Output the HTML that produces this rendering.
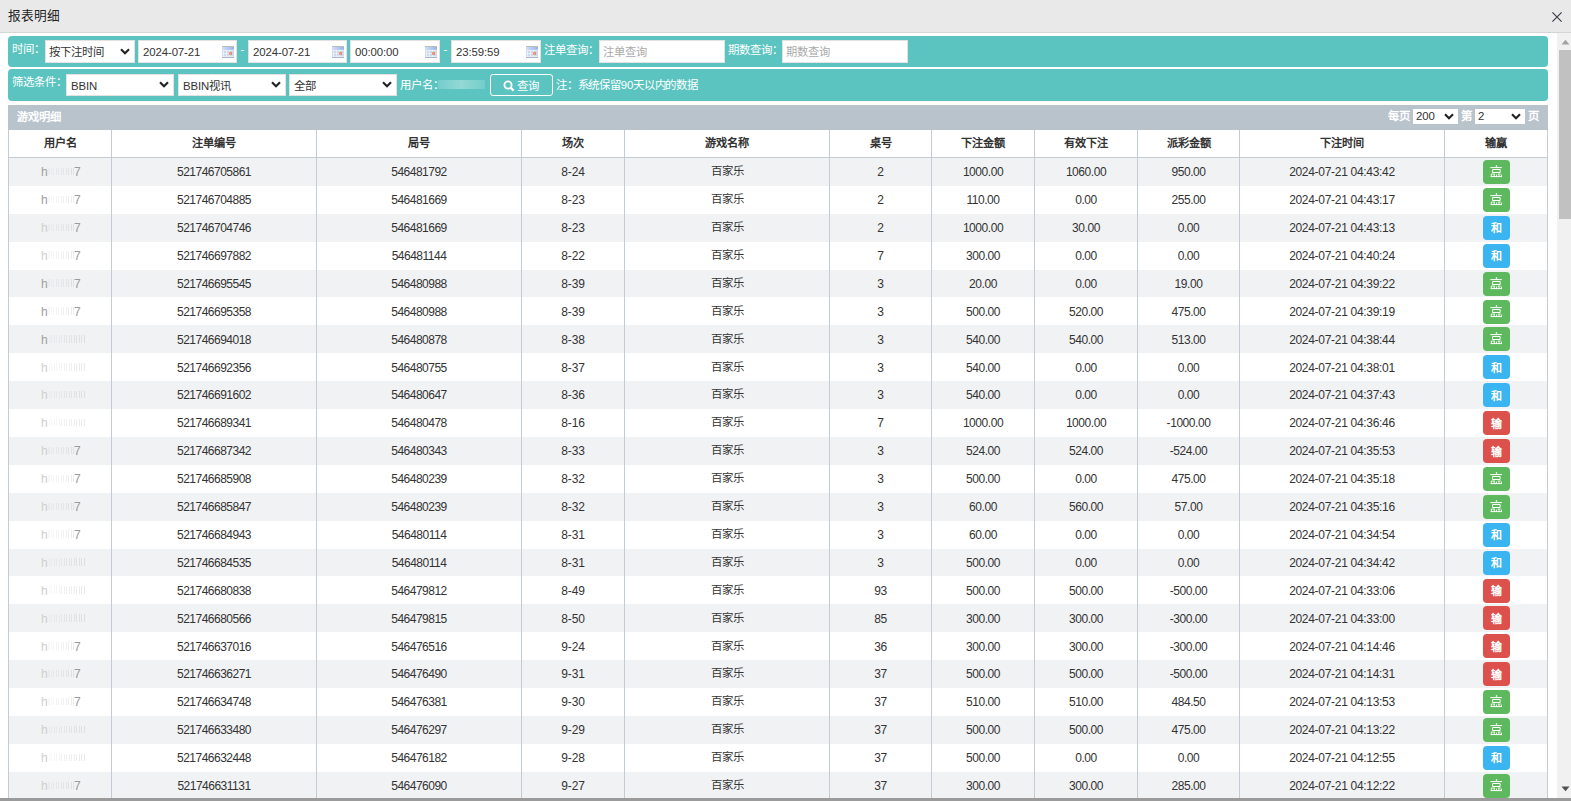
<!DOCTYPE html>
<html lang="zh-CN"><head><meta charset="utf-8"><style>
*{box-sizing:border-box}
html,body{margin:0;padding:0}
body{width:1571px;height:801px;overflow:hidden;position:relative;background:#fff;font-family:"Liberation Sans",sans-serif;color:#333}
.a{position:absolute;white-space:nowrap}
.hdr{position:absolute;left:0;top:0;width:1571px;height:33px;background:#e9e9e9;border-bottom:1px solid #d5d5d5}
.panel{position:absolute;left:8px;width:1540px;background:#5bc4c0;border-radius:4px}
.lbl{position:absolute;color:#fff;font-size:11.4px;font-weight:500;white-space:nowrap;line-height:1}
.box{position:absolute;background:#fff;border:1px solid #e6e1e1}
.txt{position:absolute;font-size:11.4px;letter-spacing:-0.1px;color:#333;white-space:nowrap;line-height:1}
.ph{color:#aaa;font-size:11.3px;letter-spacing:0}
.cal{position:absolute;width:12px;height:12px;background:#cfd9ec;border:1px solid #a3b3cc;border-top:3px solid #8fa3c4}
.cal i{position:absolute;right:1px;bottom:1px;width:4px;height:4px;background:#e59b9b}
.chev{position:absolute}
.bar{position:absolute;left:8px;top:105px;width:1540px;height:25px;background:#b9c3cc}
.tbl{position:absolute;left:8px;top:130px;width:1540px}
.vl{position:absolute;width:1px;background:#c3cbd4}
.row{position:absolute;left:8px;width:1540px}
.c{position:absolute;text-align:center;font-size:11.2px;line-height:1;white-space:nowrap;color:#333}
.h{font-weight:bold;color:#333}
.bd{position:absolute;width:27px;height:24px;border-radius:4px;color:#fff;font-size:11px;line-height:24px;text-align:center;font-weight:bold}
.w{background:#5eb95e}.t{background:#3bb4f2}.l{background:#dd514c}
.sb{position:absolute;left:1557px;top:33px;width:14px;height:765px;background:#f1f1f1}
.thumb{position:absolute;left:1559px;top:50px;width:12px;height:169px;background:#c1c1c1}
.hbar{position:absolute;left:0;top:798px;width:1571px;height:3px;background:#9b9b9b}
</style></head><body>

<div class="hdr"></div>
<div class="a" style="left:8px;top:8px;font-size:12.7px;line-height:16px;color:#222;font-weight:500">报表明细</div>
<svg class="a" style="left:1551px;top:11px" width="12" height="12" viewBox="0 0 12 12"><path d="M1.4 1.4 L10.6 10.6 M10.6 1.4 L1.4 10.6" stroke="#3a3d45" stroke-width="1.15"/></svg>
<div class="panel" style="top:36px;height:31px"></div>
<div class="lbl" style="left:12px;top:43.7px">时间：</div>
<div class="box" style="left:45px;top:40px;width:90px;height:23px"></div>
<div class="txt" style="left:49px;top:47px">按下注时间</div>
<svg class="chev" style="left:120px;top:47.6px" width="10" height="7" viewBox="0 0 10 7"><path d="M1 1.3 L5 5.3 L9 1.3" fill="none" stroke="#222" stroke-width="2.1"/></svg>
<div class="box" style="left:138px;top:40px;width:99px;height:23px"></div>
<div class="txt" style="left:143px;top:47.4px">2024-07-21</div>
<svg class="a" style="left:222px;top:45.6px" width="12" height="12" viewBox="0 0 12 12"><defs><linearGradient id="cg222" x1="0" x2="1"><stop offset="0" stop-color="#d4e0fa"/><stop offset="1" stop-color="#94b0ec"/></linearGradient></defs><rect x="0" y="0" width="12" height="12" rx="1" fill="#cdd8ea"/><rect x="0" y="0" width="12" height="1" fill="#b9bdb3"/><rect x="0" y="1" width="12" height="2.6" fill="url(#cg222)"/><path d="M0.5 4.6H11.5M0.5 7.6H11.5M0.5 10.4H11.5M1.5 4V11M4.5 4V11M7.5 4V11" stroke="#f2f6fc" stroke-width="0.7"/><circle cx="8.6" cy="7.4" r="1.7" fill="#e9866a"/><circle cx="8.6" cy="7.2" r="0.45" fill="#fbe3da"/><rect x="0" y="11" width="12" height="1" fill="#a9b4c6"/></svg>
<div class="box" style="left:248px;top:40px;width:99px;height:23px"></div>
<div class="txt" style="left:253px;top:47.4px">2024-07-21</div>
<svg class="a" style="left:332px;top:45.6px" width="12" height="12" viewBox="0 0 12 12"><defs><linearGradient id="cg332" x1="0" x2="1"><stop offset="0" stop-color="#d4e0fa"/><stop offset="1" stop-color="#94b0ec"/></linearGradient></defs><rect x="0" y="0" width="12" height="12" rx="1" fill="#cdd8ea"/><rect x="0" y="0" width="12" height="1" fill="#b9bdb3"/><rect x="0" y="1" width="12" height="2.6" fill="url(#cg332)"/><path d="M0.5 4.6H11.5M0.5 7.6H11.5M0.5 10.4H11.5M1.5 4V11M4.5 4V11M7.5 4V11" stroke="#f2f6fc" stroke-width="0.7"/><circle cx="8.6" cy="7.4" r="1.7" fill="#e9866a"/><circle cx="8.6" cy="7.2" r="0.45" fill="#fbe3da"/><rect x="0" y="11" width="12" height="1" fill="#a9b4c6"/></svg>
<div class="box" style="left:350px;top:40px;width:90px;height:23px"></div>
<div class="txt" style="left:355px;top:47.4px">00:00:00</div>
<svg class="a" style="left:425px;top:45.6px" width="12" height="12" viewBox="0 0 12 12"><defs><linearGradient id="cg425" x1="0" x2="1"><stop offset="0" stop-color="#d4e0fa"/><stop offset="1" stop-color="#94b0ec"/></linearGradient></defs><rect x="0" y="0" width="12" height="12" rx="1" fill="#cdd8ea"/><rect x="0" y="0" width="12" height="1" fill="#b9bdb3"/><rect x="0" y="1" width="12" height="2.6" fill="url(#cg425)"/><path d="M0.5 4.6H11.5M0.5 7.6H11.5M0.5 10.4H11.5M1.5 4V11M4.5 4V11M7.5 4V11" stroke="#f2f6fc" stroke-width="0.7"/><circle cx="8.6" cy="7.4" r="1.7" fill="#e9866a"/><circle cx="8.6" cy="7.2" r="0.45" fill="#fbe3da"/><rect x="0" y="11" width="12" height="1" fill="#a9b4c6"/></svg>
<div class="box" style="left:451px;top:40px;width:90px;height:23px"></div>
<div class="txt" style="left:456px;top:47.4px">23:59:59</div>
<svg class="a" style="left:526px;top:45.6px" width="12" height="12" viewBox="0 0 12 12"><defs><linearGradient id="cg526" x1="0" x2="1"><stop offset="0" stop-color="#d4e0fa"/><stop offset="1" stop-color="#94b0ec"/></linearGradient></defs><rect x="0" y="0" width="12" height="12" rx="1" fill="#cdd8ea"/><rect x="0" y="0" width="12" height="1" fill="#b9bdb3"/><rect x="0" y="1" width="12" height="2.6" fill="url(#cg526)"/><path d="M0.5 4.6H11.5M0.5 7.6H11.5M0.5 10.4H11.5M1.5 4V11M4.5 4V11M7.5 4V11" stroke="#f2f6fc" stroke-width="0.7"/><circle cx="8.6" cy="7.4" r="1.7" fill="#e9866a"/><circle cx="8.6" cy="7.2" r="0.45" fill="#fbe3da"/><rect x="0" y="11" width="12" height="1" fill="#a9b4c6"/></svg>
<div class="lbl" style="left:240.5px;top:44px">-</div>
<div class="lbl" style="left:443.5px;top:44px">-</div>
<div class="lbl" style="left:544px;top:45px">注单查询：</div>
<div class="box" style="left:599px;top:40px;width:126px;height:23px"></div>
<div class="txt ph" style="left:603px;top:47px">注单查询</div>
<div class="lbl" style="left:728px;top:45px">期数查询：</div>
<div class="box" style="left:782px;top:40px;width:126px;height:23px"></div>
<div class="txt ph" style="left:786px;top:47px">期数查询</div>
<div class="panel" style="top:69px;height:32px"></div>
<div class="lbl" style="left:12px;top:77px">筛选条件：</div>
<div class="box" style="left:66px;top:74px;width:108px;height:22px"></div>
<div class="txt" style="left:71px;top:80.6px">BBIN</div>
<svg class="chev" style="left:159px;top:81.4px" width="10" height="7" viewBox="0 0 10 7"><path d="M1 1.3 L5 5.3 L9 1.3" fill="none" stroke="#222" stroke-width="2.1"/></svg>
<div class="box" style="left:178px;top:74px;width:108px;height:22px"></div>
<div class="txt" style="left:183px;top:80.6px">BBIN视讯</div>
<svg class="chev" style="left:271px;top:81.4px" width="10" height="7" viewBox="0 0 10 7"><path d="M1 1.3 L5 5.3 L9 1.3" fill="none" stroke="#222" stroke-width="2.1"/></svg>
<div class="box" style="left:289px;top:74px;width:108px;height:22px"></div>
<div class="txt" style="left:294px;top:80.6px">全部</div>
<svg class="chev" style="left:382px;top:81.4px" width="10" height="7" viewBox="0 0 10 7"><path d="M1 1.3 L5 5.3 L9 1.3" fill="none" stroke="#222" stroke-width="2.1"/></svg>
<div class="lbl" style="left:400px;top:80px">用户名：</div>
<div class="a" style="left:438px;top:80px;width:47px;height:9px;background:linear-gradient(90deg,rgba(255,255,255,.15),rgba(255,255,255,.35),rgba(255,255,255,.15))"></div>
<div class="a" style="left:490px;top:74px;width:63px;height:22px;border:1px solid #fff;border-radius:3px"></div>
<svg class="a" style="left:503px;top:80px" width="12" height="12" viewBox="0 0 12 12"><circle cx="5" cy="5" r="3.6" fill="none" stroke="#fff" stroke-width="1.8"/><path d="M7.6 7.6 L10.6 10.6" stroke="#fff" stroke-width="2.2"/></svg>
<div class="lbl" style="left:517px;top:80.5px">查询</div>
<div class="lbl" style="left:556px;top:80px;letter-spacing:-0.2px">注：系统保留90天以内的数据</div>
<div class="bar"></div>
<div class="lbl" style="left:16.5px;top:112px;font-weight:bold;font-size:11.3px">游戏明细</div>
<div class="lbl" style="left:1388px;top:111px;font-weight:bold">每页</div>
<div class="a" style="left:1413px;top:109px;width:45px;height:15px;background:#fff"></div>
<div class="txt" style="left:1416px;top:111px">200</div>
<svg class="chev" style="left:1444px;top:113px" width="10" height="7" viewBox="0 0 10 7"><path d="M1 1.3 L5 5.3 L9 1.3" fill="none" stroke="#222" stroke-width="2.1"/></svg>
<div class="lbl" style="left:1461px;top:111px;font-weight:bold">第</div>
<div class="a" style="left:1475px;top:109px;width:50px;height:15px;background:#fff"></div>
<div class="txt" style="left:1478px;top:111px">2</div>
<svg class="chev" style="left:1511px;top:113px" width="10" height="7" viewBox="0 0 10 7"><path d="M1 1.3 L5 5.3 L9 1.3" fill="none" stroke="#222" stroke-width="2.1"/></svg>
<div class="lbl" style="left:1528px;top:111px;font-weight:bold">页</div>
<div class="a" style="left:8px;top:130px;width:1540px;height:28px;background:#fff"></div>
<div class="row" style="top:158.00px;height:27.9px;background:#f1f2f4"></div>
<div class="row" style="top:213.80px;height:27.9px;background:#f1f2f4"></div>
<div class="row" style="top:269.60px;height:27.9px;background:#f1f2f4"></div>
<div class="row" style="top:325.40px;height:27.9px;background:#f1f2f4"></div>
<div class="row" style="top:381.20px;height:27.9px;background:#f1f2f4"></div>
<div class="row" style="top:437.00px;height:27.9px;background:#f1f2f4"></div>
<div class="row" style="top:492.80px;height:27.9px;background:#f1f2f4"></div>
<div class="row" style="top:548.60px;height:27.9px;background:#f1f2f4"></div>
<div class="row" style="top:604.40px;height:27.9px;background:#f1f2f4"></div>
<div class="row" style="top:660.20px;height:27.9px;background:#f1f2f4"></div>
<div class="row" style="top:716.00px;height:27.9px;background:#f1f2f4"></div>
<div class="row" style="top:771.80px;height:27.9px;background:#f1f2f4"></div>
<div class="a" style="left:8px;top:157px;width:1540px;height:1px;background:#c3cbd4"></div>
<div class="vl" style="left:8px;top:130px;height:668px"></div>
<div class="vl" style="left:111px;top:130px;height:668px"></div>
<div class="vl" style="left:316px;top:130px;height:668px"></div>
<div class="vl" style="left:521px;top:130px;height:668px"></div>
<div class="vl" style="left:624px;top:130px;height:668px"></div>
<div class="vl" style="left:829px;top:130px;height:668px"></div>
<div class="vl" style="left:931px;top:130px;height:668px"></div>
<div class="vl" style="left:1034px;top:130px;height:668px"></div>
<div class="vl" style="left:1137px;top:130px;height:668px"></div>
<div class="vl" style="left:1239px;top:130px;height:668px"></div>
<div class="vl" style="left:1444px;top:130px;height:668px"></div>
<div class="vl" style="left:1547px;top:130px;height:668px"></div>
<div class="c h" style="left:9px;width:102px;top:138px">用户名</div>
<div class="c h" style="left:112px;width:204px;top:138px">注单编号</div>
<div class="c h" style="left:317px;width:204px;top:138px">局号</div>
<div class="c h" style="left:522px;width:102px;top:138px">场次</div>
<div class="c h" style="left:625px;width:204px;top:138px">游戏名称</div>
<div class="c h" style="left:830px;width:101px;top:138px">桌号</div>
<div class="c h" style="left:932px;width:102px;top:138px">下注金额</div>
<div class="c h" style="left:1035px;width:102px;top:138px">有效下注</div>
<div class="c h" style="left:1138px;width:101px;top:138px">派彩金额</div>
<div class="c h" style="left:1240px;width:204px;top:138px">下注时间</div>
<div class="c h" style="left:1445px;width:102px;top:138px">输赢</div>
<div class="a" style="left:41px;top:166.20px;font-size:12px;line-height:1;color:#a0a0a0">h</div>
<div class="a" style="left:46px;top:167.70px;width:30px;height:7.5px;background:repeating-linear-gradient(90deg,rgba(120,120,120,.16) 0 1px,rgba(120,120,120,0) 1px 2.5px);-webkit-mask-image:linear-gradient(90deg,rgba(0,0,0,.25),#000)"></div>
<div class="a" style="left:74px;top:166.20px;font-size:12px;line-height:1;color:#9a9a9a">7</div>
<div class="c" style="left:112px;width:204px;top:166.20px;font-size:12px;letter-spacing:-0.5px">521746705861</div>
<div class="c" style="left:317px;width:204px;top:166.20px;font-size:12px;letter-spacing:-0.5px">546481792</div>
<div class="c" style="left:522px;width:102px;top:166.20px;font-size:12px;letter-spacing:-0.1px">8-24</div>
<div class="c" style="left:625px;width:204px;top:166.20px;font-size:11.4px;letter-spacing:0px">百家乐</div>
<div class="c" style="left:830px;width:101px;top:166.20px;font-size:12px;letter-spacing:-0.3px">2</div>
<div class="c" style="left:932px;width:102px;top:166.20px;font-size:12px;letter-spacing:-0.45px">1000.00</div>
<div class="c" style="left:1035px;width:102px;top:166.20px;font-size:12px;letter-spacing:-0.45px">1060.00</div>
<div class="c" style="left:1138px;width:101px;top:166.20px;font-size:12px;letter-spacing:-0.45px">950.00</div>
<div class="c" style="left:1240px;width:204px;top:166.20px;font-size:12px;letter-spacing:-0.3px">2024-07-21 04:43:42</div>
<svg class="a" style="left:1483px;top:160.00px" width="27" height="24" viewBox="0 0 27 24"><rect width="27" height="24" rx="4" fill="#5eb95e"/><g fill="none" stroke="#fff" stroke-width="1"><path d="M13.5 5.2V6.8" stroke-width="1.3"/><path d="M7.3 7.6H18.9"/><path d="M9.6 9.5H17.1V12.5H9.6Z"/><path d="M7.6 16.6H19"/><path d="M8.3 14V16.6M11.2 14V16.6M13.5 14.5V16.6M16 14V16.6M18.4 14.6V16.6" stroke-width="0.9"/><path d="M8.3 14H12M14.8 14H17.8" stroke-width="0.8"/></g></svg>
<div class="a" style="left:41px;top:194.10px;font-size:12px;line-height:1;color:#a0a0a0">h</div>
<div class="a" style="left:46px;top:195.60px;width:30px;height:7.5px;background:repeating-linear-gradient(90deg,rgba(120,120,120,.16) 0 1px,rgba(120,120,120,0) 1px 2.5px);-webkit-mask-image:linear-gradient(90deg,rgba(0,0,0,.25),#000)"></div>
<div class="a" style="left:74px;top:194.10px;font-size:12px;line-height:1;color:#9a9a9a">7</div>
<div class="c" style="left:112px;width:204px;top:194.10px;font-size:12px;letter-spacing:-0.5px">521746704885</div>
<div class="c" style="left:317px;width:204px;top:194.10px;font-size:12px;letter-spacing:-0.5px">546481669</div>
<div class="c" style="left:522px;width:102px;top:194.10px;font-size:12px;letter-spacing:-0.1px">8-23</div>
<div class="c" style="left:625px;width:204px;top:194.10px;font-size:11.4px;letter-spacing:0px">百家乐</div>
<div class="c" style="left:830px;width:101px;top:194.10px;font-size:12px;letter-spacing:-0.3px">2</div>
<div class="c" style="left:932px;width:102px;top:194.10px;font-size:12px;letter-spacing:-0.45px">110.00</div>
<div class="c" style="left:1035px;width:102px;top:194.10px;font-size:12px;letter-spacing:-0.45px">0.00</div>
<div class="c" style="left:1138px;width:101px;top:194.10px;font-size:12px;letter-spacing:-0.45px">255.00</div>
<div class="c" style="left:1240px;width:204px;top:194.10px;font-size:12px;letter-spacing:-0.3px">2024-07-21 04:43:17</div>
<svg class="a" style="left:1483px;top:187.90px" width="27" height="24" viewBox="0 0 27 24"><rect width="27" height="24" rx="4" fill="#5eb95e"/><g fill="none" stroke="#fff" stroke-width="1"><path d="M13.5 5.2V6.8" stroke-width="1.3"/><path d="M7.3 7.6H18.9"/><path d="M9.6 9.5H17.1V12.5H9.6Z"/><path d="M7.6 16.6H19"/><path d="M8.3 14V16.6M11.2 14V16.6M13.5 14.5V16.6M16 14V16.6M18.4 14.6V16.6" stroke-width="0.9"/><path d="M8.3 14H12M14.8 14H17.8" stroke-width="0.8"/></g></svg>
<div class="a" style="left:41px;top:222.00px;font-size:12px;line-height:1;color:#d0d0d0">h</div>
<div class="a" style="left:46px;top:223.50px;width:30px;height:7.5px;background:repeating-linear-gradient(90deg,rgba(120,120,120,.16) 0 1px,rgba(120,120,120,0) 1px 2.5px);-webkit-mask-image:linear-gradient(90deg,rgba(0,0,0,.25),#000)"></div>
<div class="a" style="left:74px;top:222.00px;font-size:12px;line-height:1;color:#9a9a9a">7</div>
<div class="c" style="left:112px;width:204px;top:222.00px;font-size:12px;letter-spacing:-0.5px">521746704746</div>
<div class="c" style="left:317px;width:204px;top:222.00px;font-size:12px;letter-spacing:-0.5px">546481669</div>
<div class="c" style="left:522px;width:102px;top:222.00px;font-size:12px;letter-spacing:-0.1px">8-23</div>
<div class="c" style="left:625px;width:204px;top:222.00px;font-size:11.4px;letter-spacing:0px">百家乐</div>
<div class="c" style="left:830px;width:101px;top:222.00px;font-size:12px;letter-spacing:-0.3px">2</div>
<div class="c" style="left:932px;width:102px;top:222.00px;font-size:12px;letter-spacing:-0.45px">1000.00</div>
<div class="c" style="left:1035px;width:102px;top:222.00px;font-size:12px;letter-spacing:-0.45px">30.00</div>
<div class="c" style="left:1138px;width:101px;top:222.00px;font-size:12px;letter-spacing:-0.45px">0.00</div>
<div class="c" style="left:1240px;width:204px;top:222.00px;font-size:12px;letter-spacing:-0.3px">2024-07-21 04:43:13</div>
<div class="bd t" style="left:1483px;top:215.80px"><span style="position:relative;top:0.5px">和</span></div>
<div class="a" style="left:41px;top:249.90px;font-size:12px;line-height:1;color:#d0d0d0">h</div>
<div class="a" style="left:46px;top:251.40px;width:30px;height:7.5px;background:repeating-linear-gradient(90deg,rgba(120,120,120,.16) 0 1px,rgba(120,120,120,0) 1px 2.5px);-webkit-mask-image:linear-gradient(90deg,rgba(0,0,0,.25),#000)"></div>
<div class="a" style="left:74px;top:249.90px;font-size:12px;line-height:1;color:#9a9a9a">7</div>
<div class="c" style="left:112px;width:204px;top:249.90px;font-size:12px;letter-spacing:-0.5px">521746697882</div>
<div class="c" style="left:317px;width:204px;top:249.90px;font-size:12px;letter-spacing:-0.5px">546481144</div>
<div class="c" style="left:522px;width:102px;top:249.90px;font-size:12px;letter-spacing:-0.1px">8-22</div>
<div class="c" style="left:625px;width:204px;top:249.90px;font-size:11.4px;letter-spacing:0px">百家乐</div>
<div class="c" style="left:830px;width:101px;top:249.90px;font-size:12px;letter-spacing:-0.3px">7</div>
<div class="c" style="left:932px;width:102px;top:249.90px;font-size:12px;letter-spacing:-0.45px">300.00</div>
<div class="c" style="left:1035px;width:102px;top:249.90px;font-size:12px;letter-spacing:-0.45px">0.00</div>
<div class="c" style="left:1138px;width:101px;top:249.90px;font-size:12px;letter-spacing:-0.45px">0.00</div>
<div class="c" style="left:1240px;width:204px;top:249.90px;font-size:12px;letter-spacing:-0.3px">2024-07-21 04:40:24</div>
<div class="bd t" style="left:1483px;top:243.70px"><span style="position:relative;top:0.5px">和</span></div>
<div class="a" style="left:41px;top:277.80px;font-size:12px;line-height:1;color:#a0a0a0">h</div>
<div class="a" style="left:46px;top:279.30px;width:30px;height:7.5px;background:repeating-linear-gradient(90deg,rgba(120,120,120,.16) 0 1px,rgba(120,120,120,0) 1px 2.5px);-webkit-mask-image:linear-gradient(90deg,rgba(0,0,0,.25),#000)"></div>
<div class="a" style="left:74px;top:277.80px;font-size:12px;line-height:1;color:#9a9a9a">7</div>
<div class="c" style="left:112px;width:204px;top:277.80px;font-size:12px;letter-spacing:-0.5px">521746695545</div>
<div class="c" style="left:317px;width:204px;top:277.80px;font-size:12px;letter-spacing:-0.5px">546480988</div>
<div class="c" style="left:522px;width:102px;top:277.80px;font-size:12px;letter-spacing:-0.1px">8-39</div>
<div class="c" style="left:625px;width:204px;top:277.80px;font-size:11.4px;letter-spacing:0px">百家乐</div>
<div class="c" style="left:830px;width:101px;top:277.80px;font-size:12px;letter-spacing:-0.3px">3</div>
<div class="c" style="left:932px;width:102px;top:277.80px;font-size:12px;letter-spacing:-0.45px">20.00</div>
<div class="c" style="left:1035px;width:102px;top:277.80px;font-size:12px;letter-spacing:-0.45px">0.00</div>
<div class="c" style="left:1138px;width:101px;top:277.80px;font-size:12px;letter-spacing:-0.45px">19.00</div>
<div class="c" style="left:1240px;width:204px;top:277.80px;font-size:12px;letter-spacing:-0.3px">2024-07-21 04:39:22</div>
<svg class="a" style="left:1483px;top:271.60px" width="27" height="24" viewBox="0 0 27 24"><rect width="27" height="24" rx="4" fill="#5eb95e"/><g fill="none" stroke="#fff" stroke-width="1"><path d="M13.5 5.2V6.8" stroke-width="1.3"/><path d="M7.3 7.6H18.9"/><path d="M9.6 9.5H17.1V12.5H9.6Z"/><path d="M7.6 16.6H19"/><path d="M8.3 14V16.6M11.2 14V16.6M13.5 14.5V16.6M16 14V16.6M18.4 14.6V16.6" stroke-width="0.9"/><path d="M8.3 14H12M14.8 14H17.8" stroke-width="0.8"/></g></svg>
<div class="a" style="left:41px;top:305.70px;font-size:12px;line-height:1;color:#a0a0a0">h</div>
<div class="a" style="left:46px;top:307.20px;width:30px;height:7.5px;background:repeating-linear-gradient(90deg,rgba(120,120,120,.16) 0 1px,rgba(120,120,120,0) 1px 2.5px);-webkit-mask-image:linear-gradient(90deg,rgba(0,0,0,.25),#000)"></div>
<div class="a" style="left:74px;top:305.70px;font-size:12px;line-height:1;color:#9a9a9a">7</div>
<div class="c" style="left:112px;width:204px;top:305.70px;font-size:12px;letter-spacing:-0.5px">521746695358</div>
<div class="c" style="left:317px;width:204px;top:305.70px;font-size:12px;letter-spacing:-0.5px">546480988</div>
<div class="c" style="left:522px;width:102px;top:305.70px;font-size:12px;letter-spacing:-0.1px">8-39</div>
<div class="c" style="left:625px;width:204px;top:305.70px;font-size:11.4px;letter-spacing:0px">百家乐</div>
<div class="c" style="left:830px;width:101px;top:305.70px;font-size:12px;letter-spacing:-0.3px">3</div>
<div class="c" style="left:932px;width:102px;top:305.70px;font-size:12px;letter-spacing:-0.45px">500.00</div>
<div class="c" style="left:1035px;width:102px;top:305.70px;font-size:12px;letter-spacing:-0.45px">520.00</div>
<div class="c" style="left:1138px;width:101px;top:305.70px;font-size:12px;letter-spacing:-0.45px">475.00</div>
<div class="c" style="left:1240px;width:204px;top:305.70px;font-size:12px;letter-spacing:-0.3px">2024-07-21 04:39:19</div>
<svg class="a" style="left:1483px;top:299.50px" width="27" height="24" viewBox="0 0 27 24"><rect width="27" height="24" rx="4" fill="#5eb95e"/><g fill="none" stroke="#fff" stroke-width="1"><path d="M13.5 5.2V6.8" stroke-width="1.3"/><path d="M7.3 7.6H18.9"/><path d="M9.6 9.5H17.1V12.5H9.6Z"/><path d="M7.6 16.6H19"/><path d="M8.3 14V16.6M11.2 14V16.6M13.5 14.5V16.6M16 14V16.6M18.4 14.6V16.6" stroke-width="0.9"/><path d="M8.3 14H12M14.8 14H17.8" stroke-width="0.8"/></g></svg>
<div class="a" style="left:41px;top:333.60px;font-size:12px;line-height:1;color:#a0a0a0">h</div>
<div class="a" style="left:46px;top:335.10px;width:39px;height:7.5px;background:repeating-linear-gradient(90deg,rgba(120,120,120,.16) 0 1px,rgba(120,120,120,0) 1px 2.5px);-webkit-mask-image:linear-gradient(90deg,rgba(0,0,0,.25),#000)"></div>
<div class="c" style="left:112px;width:204px;top:333.60px;font-size:12px;letter-spacing:-0.5px">521746694018</div>
<div class="c" style="left:317px;width:204px;top:333.60px;font-size:12px;letter-spacing:-0.5px">546480878</div>
<div class="c" style="left:522px;width:102px;top:333.60px;font-size:12px;letter-spacing:-0.1px">8-38</div>
<div class="c" style="left:625px;width:204px;top:333.60px;font-size:11.4px;letter-spacing:0px">百家乐</div>
<div class="c" style="left:830px;width:101px;top:333.60px;font-size:12px;letter-spacing:-0.3px">3</div>
<div class="c" style="left:932px;width:102px;top:333.60px;font-size:12px;letter-spacing:-0.45px">540.00</div>
<div class="c" style="left:1035px;width:102px;top:333.60px;font-size:12px;letter-spacing:-0.45px">540.00</div>
<div class="c" style="left:1138px;width:101px;top:333.60px;font-size:12px;letter-spacing:-0.45px">513.00</div>
<div class="c" style="left:1240px;width:204px;top:333.60px;font-size:12px;letter-spacing:-0.3px">2024-07-21 04:38:44</div>
<svg class="a" style="left:1483px;top:327.40px" width="27" height="24" viewBox="0 0 27 24"><rect width="27" height="24" rx="4" fill="#5eb95e"/><g fill="none" stroke="#fff" stroke-width="1"><path d="M13.5 5.2V6.8" stroke-width="1.3"/><path d="M7.3 7.6H18.9"/><path d="M9.6 9.5H17.1V12.5H9.6Z"/><path d="M7.6 16.6H19"/><path d="M8.3 14V16.6M11.2 14V16.6M13.5 14.5V16.6M16 14V16.6M18.4 14.6V16.6" stroke-width="0.9"/><path d="M8.3 14H12M14.8 14H17.8" stroke-width="0.8"/></g></svg>
<div class="a" style="left:41px;top:361.50px;font-size:12px;line-height:1;color:#d0d0d0">h</div>
<div class="a" style="left:46px;top:363.00px;width:39px;height:7.5px;background:repeating-linear-gradient(90deg,rgba(120,120,120,.16) 0 1px,rgba(120,120,120,0) 1px 2.5px);-webkit-mask-image:linear-gradient(90deg,rgba(0,0,0,.25),#000)"></div>
<div class="c" style="left:112px;width:204px;top:361.50px;font-size:12px;letter-spacing:-0.5px">521746692356</div>
<div class="c" style="left:317px;width:204px;top:361.50px;font-size:12px;letter-spacing:-0.5px">546480755</div>
<div class="c" style="left:522px;width:102px;top:361.50px;font-size:12px;letter-spacing:-0.1px">8-37</div>
<div class="c" style="left:625px;width:204px;top:361.50px;font-size:11.4px;letter-spacing:0px">百家乐</div>
<div class="c" style="left:830px;width:101px;top:361.50px;font-size:12px;letter-spacing:-0.3px">3</div>
<div class="c" style="left:932px;width:102px;top:361.50px;font-size:12px;letter-spacing:-0.45px">540.00</div>
<div class="c" style="left:1035px;width:102px;top:361.50px;font-size:12px;letter-spacing:-0.45px">0.00</div>
<div class="c" style="left:1138px;width:101px;top:361.50px;font-size:12px;letter-spacing:-0.45px">0.00</div>
<div class="c" style="left:1240px;width:204px;top:361.50px;font-size:12px;letter-spacing:-0.3px">2024-07-21 04:38:01</div>
<div class="bd t" style="left:1483px;top:355.30px"><span style="position:relative;top:0.5px">和</span></div>
<div class="a" style="left:41px;top:389.40px;font-size:12px;line-height:1;color:#d0d0d0">h</div>
<div class="a" style="left:46px;top:390.90px;width:39px;height:7.5px;background:repeating-linear-gradient(90deg,rgba(120,120,120,.16) 0 1px,rgba(120,120,120,0) 1px 2.5px);-webkit-mask-image:linear-gradient(90deg,rgba(0,0,0,.25),#000)"></div>
<div class="c" style="left:112px;width:204px;top:389.40px;font-size:12px;letter-spacing:-0.5px">521746691602</div>
<div class="c" style="left:317px;width:204px;top:389.40px;font-size:12px;letter-spacing:-0.5px">546480647</div>
<div class="c" style="left:522px;width:102px;top:389.40px;font-size:12px;letter-spacing:-0.1px">8-36</div>
<div class="c" style="left:625px;width:204px;top:389.40px;font-size:11.4px;letter-spacing:0px">百家乐</div>
<div class="c" style="left:830px;width:101px;top:389.40px;font-size:12px;letter-spacing:-0.3px">3</div>
<div class="c" style="left:932px;width:102px;top:389.40px;font-size:12px;letter-spacing:-0.45px">540.00</div>
<div class="c" style="left:1035px;width:102px;top:389.40px;font-size:12px;letter-spacing:-0.45px">0.00</div>
<div class="c" style="left:1138px;width:101px;top:389.40px;font-size:12px;letter-spacing:-0.45px">0.00</div>
<div class="c" style="left:1240px;width:204px;top:389.40px;font-size:12px;letter-spacing:-0.3px">2024-07-21 04:37:43</div>
<div class="bd t" style="left:1483px;top:383.20px"><span style="position:relative;top:0.5px">和</span></div>
<div class="a" style="left:41px;top:417.30px;font-size:12px;line-height:1;color:#d0d0d0">h</div>
<div class="a" style="left:46px;top:418.80px;width:39px;height:7.5px;background:repeating-linear-gradient(90deg,rgba(120,120,120,.16) 0 1px,rgba(120,120,120,0) 1px 2.5px);-webkit-mask-image:linear-gradient(90deg,rgba(0,0,0,.25),#000)"></div>
<div class="c" style="left:112px;width:204px;top:417.30px;font-size:12px;letter-spacing:-0.5px">521746689341</div>
<div class="c" style="left:317px;width:204px;top:417.30px;font-size:12px;letter-spacing:-0.5px">546480478</div>
<div class="c" style="left:522px;width:102px;top:417.30px;font-size:12px;letter-spacing:-0.1px">8-16</div>
<div class="c" style="left:625px;width:204px;top:417.30px;font-size:11.4px;letter-spacing:0px">百家乐</div>
<div class="c" style="left:830px;width:101px;top:417.30px;font-size:12px;letter-spacing:-0.3px">7</div>
<div class="c" style="left:932px;width:102px;top:417.30px;font-size:12px;letter-spacing:-0.45px">1000.00</div>
<div class="c" style="left:1035px;width:102px;top:417.30px;font-size:12px;letter-spacing:-0.45px">1000.00</div>
<div class="c" style="left:1138px;width:101px;top:417.30px;font-size:12px;letter-spacing:-0.45px">-1000.00</div>
<div class="c" style="left:1240px;width:204px;top:417.30px;font-size:12px;letter-spacing:-0.3px">2024-07-21 04:36:46</div>
<div class="bd l" style="left:1483px;top:411.10px"><span style="position:relative;top:0.5px">输</span></div>
<div class="a" style="left:41px;top:445.20px;font-size:12px;line-height:1;color:#d0d0d0">h</div>
<div class="a" style="left:46px;top:446.70px;width:30px;height:7.5px;background:repeating-linear-gradient(90deg,rgba(120,120,120,.16) 0 1px,rgba(120,120,120,0) 1px 2.5px);-webkit-mask-image:linear-gradient(90deg,rgba(0,0,0,.25),#000)"></div>
<div class="a" style="left:74px;top:445.20px;font-size:12px;line-height:1;color:#9a9a9a">7</div>
<div class="c" style="left:112px;width:204px;top:445.20px;font-size:12px;letter-spacing:-0.5px">521746687342</div>
<div class="c" style="left:317px;width:204px;top:445.20px;font-size:12px;letter-spacing:-0.5px">546480343</div>
<div class="c" style="left:522px;width:102px;top:445.20px;font-size:12px;letter-spacing:-0.1px">8-33</div>
<div class="c" style="left:625px;width:204px;top:445.20px;font-size:11.4px;letter-spacing:0px">百家乐</div>
<div class="c" style="left:830px;width:101px;top:445.20px;font-size:12px;letter-spacing:-0.3px">3</div>
<div class="c" style="left:932px;width:102px;top:445.20px;font-size:12px;letter-spacing:-0.45px">524.00</div>
<div class="c" style="left:1035px;width:102px;top:445.20px;font-size:12px;letter-spacing:-0.45px">524.00</div>
<div class="c" style="left:1138px;width:101px;top:445.20px;font-size:12px;letter-spacing:-0.45px">-524.00</div>
<div class="c" style="left:1240px;width:204px;top:445.20px;font-size:12px;letter-spacing:-0.3px">2024-07-21 04:35:53</div>
<div class="bd l" style="left:1483px;top:439.00px"><span style="position:relative;top:0.5px">输</span></div>
<div class="a" style="left:41px;top:473.10px;font-size:12px;line-height:1;color:#d0d0d0">h</div>
<div class="a" style="left:46px;top:474.60px;width:30px;height:7.5px;background:repeating-linear-gradient(90deg,rgba(120,120,120,.16) 0 1px,rgba(120,120,120,0) 1px 2.5px);-webkit-mask-image:linear-gradient(90deg,rgba(0,0,0,.25),#000)"></div>
<div class="a" style="left:74px;top:473.10px;font-size:12px;line-height:1;color:#9a9a9a">7</div>
<div class="c" style="left:112px;width:204px;top:473.10px;font-size:12px;letter-spacing:-0.5px">521746685908</div>
<div class="c" style="left:317px;width:204px;top:473.10px;font-size:12px;letter-spacing:-0.5px">546480239</div>
<div class="c" style="left:522px;width:102px;top:473.10px;font-size:12px;letter-spacing:-0.1px">8-32</div>
<div class="c" style="left:625px;width:204px;top:473.10px;font-size:11.4px;letter-spacing:0px">百家乐</div>
<div class="c" style="left:830px;width:101px;top:473.10px;font-size:12px;letter-spacing:-0.3px">3</div>
<div class="c" style="left:932px;width:102px;top:473.10px;font-size:12px;letter-spacing:-0.45px">500.00</div>
<div class="c" style="left:1035px;width:102px;top:473.10px;font-size:12px;letter-spacing:-0.45px">0.00</div>
<div class="c" style="left:1138px;width:101px;top:473.10px;font-size:12px;letter-spacing:-0.45px">475.00</div>
<div class="c" style="left:1240px;width:204px;top:473.10px;font-size:12px;letter-spacing:-0.3px">2024-07-21 04:35:18</div>
<svg class="a" style="left:1483px;top:466.90px" width="27" height="24" viewBox="0 0 27 24"><rect width="27" height="24" rx="4" fill="#5eb95e"/><g fill="none" stroke="#fff" stroke-width="1"><path d="M13.5 5.2V6.8" stroke-width="1.3"/><path d="M7.3 7.6H18.9"/><path d="M9.6 9.5H17.1V12.5H9.6Z"/><path d="M7.6 16.6H19"/><path d="M8.3 14V16.6M11.2 14V16.6M13.5 14.5V16.6M16 14V16.6M18.4 14.6V16.6" stroke-width="0.9"/><path d="M8.3 14H12M14.8 14H17.8" stroke-width="0.8"/></g></svg>
<div class="a" style="left:41px;top:501.00px;font-size:12px;line-height:1;color:#d0d0d0">h</div>
<div class="a" style="left:46px;top:502.50px;width:30px;height:7.5px;background:repeating-linear-gradient(90deg,rgba(120,120,120,.16) 0 1px,rgba(120,120,120,0) 1px 2.5px);-webkit-mask-image:linear-gradient(90deg,rgba(0,0,0,.25),#000)"></div>
<div class="a" style="left:74px;top:501.00px;font-size:12px;line-height:1;color:#9a9a9a">7</div>
<div class="c" style="left:112px;width:204px;top:501.00px;font-size:12px;letter-spacing:-0.5px">521746685847</div>
<div class="c" style="left:317px;width:204px;top:501.00px;font-size:12px;letter-spacing:-0.5px">546480239</div>
<div class="c" style="left:522px;width:102px;top:501.00px;font-size:12px;letter-spacing:-0.1px">8-32</div>
<div class="c" style="left:625px;width:204px;top:501.00px;font-size:11.4px;letter-spacing:0px">百家乐</div>
<div class="c" style="left:830px;width:101px;top:501.00px;font-size:12px;letter-spacing:-0.3px">3</div>
<div class="c" style="left:932px;width:102px;top:501.00px;font-size:12px;letter-spacing:-0.45px">60.00</div>
<div class="c" style="left:1035px;width:102px;top:501.00px;font-size:12px;letter-spacing:-0.45px">560.00</div>
<div class="c" style="left:1138px;width:101px;top:501.00px;font-size:12px;letter-spacing:-0.45px">57.00</div>
<div class="c" style="left:1240px;width:204px;top:501.00px;font-size:12px;letter-spacing:-0.3px">2024-07-21 04:35:16</div>
<svg class="a" style="left:1483px;top:494.80px" width="27" height="24" viewBox="0 0 27 24"><rect width="27" height="24" rx="4" fill="#5eb95e"/><g fill="none" stroke="#fff" stroke-width="1"><path d="M13.5 5.2V6.8" stroke-width="1.3"/><path d="M7.3 7.6H18.9"/><path d="M9.6 9.5H17.1V12.5H9.6Z"/><path d="M7.6 16.6H19"/><path d="M8.3 14V16.6M11.2 14V16.6M13.5 14.5V16.6M16 14V16.6M18.4 14.6V16.6" stroke-width="0.9"/><path d="M8.3 14H12M14.8 14H17.8" stroke-width="0.8"/></g></svg>
<div class="a" style="left:41px;top:528.90px;font-size:12px;line-height:1;color:#d0d0d0">h</div>
<div class="a" style="left:46px;top:530.40px;width:30px;height:7.5px;background:repeating-linear-gradient(90deg,rgba(120,120,120,.16) 0 1px,rgba(120,120,120,0) 1px 2.5px);-webkit-mask-image:linear-gradient(90deg,rgba(0,0,0,.25),#000)"></div>
<div class="a" style="left:74px;top:528.90px;font-size:12px;line-height:1;color:#9a9a9a">7</div>
<div class="c" style="left:112px;width:204px;top:528.90px;font-size:12px;letter-spacing:-0.5px">521746684943</div>
<div class="c" style="left:317px;width:204px;top:528.90px;font-size:12px;letter-spacing:-0.5px">546480114</div>
<div class="c" style="left:522px;width:102px;top:528.90px;font-size:12px;letter-spacing:-0.1px">8-31</div>
<div class="c" style="left:625px;width:204px;top:528.90px;font-size:11.4px;letter-spacing:0px">百家乐</div>
<div class="c" style="left:830px;width:101px;top:528.90px;font-size:12px;letter-spacing:-0.3px">3</div>
<div class="c" style="left:932px;width:102px;top:528.90px;font-size:12px;letter-spacing:-0.45px">60.00</div>
<div class="c" style="left:1035px;width:102px;top:528.90px;font-size:12px;letter-spacing:-0.45px">0.00</div>
<div class="c" style="left:1138px;width:101px;top:528.90px;font-size:12px;letter-spacing:-0.45px">0.00</div>
<div class="c" style="left:1240px;width:204px;top:528.90px;font-size:12px;letter-spacing:-0.3px">2024-07-21 04:34:54</div>
<div class="bd t" style="left:1483px;top:522.70px"><span style="position:relative;top:0.5px">和</span></div>
<div class="a" style="left:41px;top:556.80px;font-size:12px;line-height:1;color:#d0d0d0">h</div>
<div class="a" style="left:46px;top:558.30px;width:39px;height:7.5px;background:repeating-linear-gradient(90deg,rgba(120,120,120,.16) 0 1px,rgba(120,120,120,0) 1px 2.5px);-webkit-mask-image:linear-gradient(90deg,rgba(0,0,0,.25),#000)"></div>
<div class="c" style="left:112px;width:204px;top:556.80px;font-size:12px;letter-spacing:-0.5px">521746684535</div>
<div class="c" style="left:317px;width:204px;top:556.80px;font-size:12px;letter-spacing:-0.5px">546480114</div>
<div class="c" style="left:522px;width:102px;top:556.80px;font-size:12px;letter-spacing:-0.1px">8-31</div>
<div class="c" style="left:625px;width:204px;top:556.80px;font-size:11.4px;letter-spacing:0px">百家乐</div>
<div class="c" style="left:830px;width:101px;top:556.80px;font-size:12px;letter-spacing:-0.3px">3</div>
<div class="c" style="left:932px;width:102px;top:556.80px;font-size:12px;letter-spacing:-0.45px">500.00</div>
<div class="c" style="left:1035px;width:102px;top:556.80px;font-size:12px;letter-spacing:-0.45px">0.00</div>
<div class="c" style="left:1138px;width:101px;top:556.80px;font-size:12px;letter-spacing:-0.45px">0.00</div>
<div class="c" style="left:1240px;width:204px;top:556.80px;font-size:12px;letter-spacing:-0.3px">2024-07-21 04:34:42</div>
<div class="bd t" style="left:1483px;top:550.60px"><span style="position:relative;top:0.5px">和</span></div>
<div class="a" style="left:41px;top:584.70px;font-size:12px;line-height:1;color:#d0d0d0">h</div>
<div class="a" style="left:46px;top:586.20px;width:39px;height:7.5px;background:repeating-linear-gradient(90deg,rgba(120,120,120,.16) 0 1px,rgba(120,120,120,0) 1px 2.5px);-webkit-mask-image:linear-gradient(90deg,rgba(0,0,0,.25),#000)"></div>
<div class="c" style="left:112px;width:204px;top:584.70px;font-size:12px;letter-spacing:-0.5px">521746680838</div>
<div class="c" style="left:317px;width:204px;top:584.70px;font-size:12px;letter-spacing:-0.5px">546479812</div>
<div class="c" style="left:522px;width:102px;top:584.70px;font-size:12px;letter-spacing:-0.1px">8-49</div>
<div class="c" style="left:625px;width:204px;top:584.70px;font-size:11.4px;letter-spacing:0px">百家乐</div>
<div class="c" style="left:830px;width:101px;top:584.70px;font-size:12px;letter-spacing:-0.3px">93</div>
<div class="c" style="left:932px;width:102px;top:584.70px;font-size:12px;letter-spacing:-0.45px">500.00</div>
<div class="c" style="left:1035px;width:102px;top:584.70px;font-size:12px;letter-spacing:-0.45px">500.00</div>
<div class="c" style="left:1138px;width:101px;top:584.70px;font-size:12px;letter-spacing:-0.45px">-500.00</div>
<div class="c" style="left:1240px;width:204px;top:584.70px;font-size:12px;letter-spacing:-0.3px">2024-07-21 04:33:06</div>
<div class="bd l" style="left:1483px;top:578.50px"><span style="position:relative;top:0.5px">输</span></div>
<div class="a" style="left:41px;top:612.60px;font-size:12px;line-height:1;color:#d0d0d0">h</div>
<div class="a" style="left:46px;top:614.10px;width:39px;height:7.5px;background:repeating-linear-gradient(90deg,rgba(120,120,120,.16) 0 1px,rgba(120,120,120,0) 1px 2.5px);-webkit-mask-image:linear-gradient(90deg,rgba(0,0,0,.25),#000)"></div>
<div class="c" style="left:112px;width:204px;top:612.60px;font-size:12px;letter-spacing:-0.5px">521746680566</div>
<div class="c" style="left:317px;width:204px;top:612.60px;font-size:12px;letter-spacing:-0.5px">546479815</div>
<div class="c" style="left:522px;width:102px;top:612.60px;font-size:12px;letter-spacing:-0.1px">8-50</div>
<div class="c" style="left:625px;width:204px;top:612.60px;font-size:11.4px;letter-spacing:0px">百家乐</div>
<div class="c" style="left:830px;width:101px;top:612.60px;font-size:12px;letter-spacing:-0.3px">85</div>
<div class="c" style="left:932px;width:102px;top:612.60px;font-size:12px;letter-spacing:-0.45px">300.00</div>
<div class="c" style="left:1035px;width:102px;top:612.60px;font-size:12px;letter-spacing:-0.45px">300.00</div>
<div class="c" style="left:1138px;width:101px;top:612.60px;font-size:12px;letter-spacing:-0.45px">-300.00</div>
<div class="c" style="left:1240px;width:204px;top:612.60px;font-size:12px;letter-spacing:-0.3px">2024-07-21 04:33:00</div>
<div class="bd l" style="left:1483px;top:606.40px"><span style="position:relative;top:0.5px">输</span></div>
<div class="a" style="left:41px;top:640.50px;font-size:12px;line-height:1;color:#d0d0d0">h</div>
<div class="a" style="left:46px;top:642.00px;width:30px;height:7.5px;background:repeating-linear-gradient(90deg,rgba(120,120,120,.16) 0 1px,rgba(120,120,120,0) 1px 2.5px);-webkit-mask-image:linear-gradient(90deg,rgba(0,0,0,.25),#000)"></div>
<div class="a" style="left:74px;top:640.50px;font-size:12px;line-height:1;color:#9a9a9a">7</div>
<div class="c" style="left:112px;width:204px;top:640.50px;font-size:12px;letter-spacing:-0.5px">521746637016</div>
<div class="c" style="left:317px;width:204px;top:640.50px;font-size:12px;letter-spacing:-0.5px">546476516</div>
<div class="c" style="left:522px;width:102px;top:640.50px;font-size:12px;letter-spacing:-0.1px">9-24</div>
<div class="c" style="left:625px;width:204px;top:640.50px;font-size:11.4px;letter-spacing:0px">百家乐</div>
<div class="c" style="left:830px;width:101px;top:640.50px;font-size:12px;letter-spacing:-0.3px">36</div>
<div class="c" style="left:932px;width:102px;top:640.50px;font-size:12px;letter-spacing:-0.45px">300.00</div>
<div class="c" style="left:1035px;width:102px;top:640.50px;font-size:12px;letter-spacing:-0.45px">300.00</div>
<div class="c" style="left:1138px;width:101px;top:640.50px;font-size:12px;letter-spacing:-0.45px">-300.00</div>
<div class="c" style="left:1240px;width:204px;top:640.50px;font-size:12px;letter-spacing:-0.3px">2024-07-21 04:14:46</div>
<div class="bd l" style="left:1483px;top:634.30px"><span style="position:relative;top:0.5px">输</span></div>
<div class="a" style="left:41px;top:668.40px;font-size:12px;line-height:1;color:#d0d0d0">h</div>
<div class="a" style="left:46px;top:669.90px;width:30px;height:7.5px;background:repeating-linear-gradient(90deg,rgba(120,120,120,.16) 0 1px,rgba(120,120,120,0) 1px 2.5px);-webkit-mask-image:linear-gradient(90deg,rgba(0,0,0,.25),#000)"></div>
<div class="a" style="left:74px;top:668.40px;font-size:12px;line-height:1;color:#9a9a9a">7</div>
<div class="c" style="left:112px;width:204px;top:668.40px;font-size:12px;letter-spacing:-0.5px">521746636271</div>
<div class="c" style="left:317px;width:204px;top:668.40px;font-size:12px;letter-spacing:-0.5px">546476490</div>
<div class="c" style="left:522px;width:102px;top:668.40px;font-size:12px;letter-spacing:-0.1px">9-31</div>
<div class="c" style="left:625px;width:204px;top:668.40px;font-size:11.4px;letter-spacing:0px">百家乐</div>
<div class="c" style="left:830px;width:101px;top:668.40px;font-size:12px;letter-spacing:-0.3px">37</div>
<div class="c" style="left:932px;width:102px;top:668.40px;font-size:12px;letter-spacing:-0.45px">500.00</div>
<div class="c" style="left:1035px;width:102px;top:668.40px;font-size:12px;letter-spacing:-0.45px">500.00</div>
<div class="c" style="left:1138px;width:101px;top:668.40px;font-size:12px;letter-spacing:-0.45px">-500.00</div>
<div class="c" style="left:1240px;width:204px;top:668.40px;font-size:12px;letter-spacing:-0.3px">2024-07-21 04:14:31</div>
<div class="bd l" style="left:1483px;top:662.20px"><span style="position:relative;top:0.5px">输</span></div>
<div class="a" style="left:41px;top:696.30px;font-size:12px;line-height:1;color:#d0d0d0">h</div>
<div class="a" style="left:46px;top:697.80px;width:30px;height:7.5px;background:repeating-linear-gradient(90deg,rgba(120,120,120,.16) 0 1px,rgba(120,120,120,0) 1px 2.5px);-webkit-mask-image:linear-gradient(90deg,rgba(0,0,0,.25),#000)"></div>
<div class="a" style="left:74px;top:696.30px;font-size:12px;line-height:1;color:#9a9a9a">7</div>
<div class="c" style="left:112px;width:204px;top:696.30px;font-size:12px;letter-spacing:-0.5px">521746634748</div>
<div class="c" style="left:317px;width:204px;top:696.30px;font-size:12px;letter-spacing:-0.5px">546476381</div>
<div class="c" style="left:522px;width:102px;top:696.30px;font-size:12px;letter-spacing:-0.1px">9-30</div>
<div class="c" style="left:625px;width:204px;top:696.30px;font-size:11.4px;letter-spacing:0px">百家乐</div>
<div class="c" style="left:830px;width:101px;top:696.30px;font-size:12px;letter-spacing:-0.3px">37</div>
<div class="c" style="left:932px;width:102px;top:696.30px;font-size:12px;letter-spacing:-0.45px">510.00</div>
<div class="c" style="left:1035px;width:102px;top:696.30px;font-size:12px;letter-spacing:-0.45px">510.00</div>
<div class="c" style="left:1138px;width:101px;top:696.30px;font-size:12px;letter-spacing:-0.45px">484.50</div>
<div class="c" style="left:1240px;width:204px;top:696.30px;font-size:12px;letter-spacing:-0.3px">2024-07-21 04:13:53</div>
<svg class="a" style="left:1483px;top:690.10px" width="27" height="24" viewBox="0 0 27 24"><rect width="27" height="24" rx="4" fill="#5eb95e"/><g fill="none" stroke="#fff" stroke-width="1"><path d="M13.5 5.2V6.8" stroke-width="1.3"/><path d="M7.3 7.6H18.9"/><path d="M9.6 9.5H17.1V12.5H9.6Z"/><path d="M7.6 16.6H19"/><path d="M8.3 14V16.6M11.2 14V16.6M13.5 14.5V16.6M16 14V16.6M18.4 14.6V16.6" stroke-width="0.9"/><path d="M8.3 14H12M14.8 14H17.8" stroke-width="0.8"/></g></svg>
<div class="a" style="left:41px;top:724.20px;font-size:12px;line-height:1;color:#d0d0d0">h</div>
<div class="a" style="left:46px;top:725.70px;width:39px;height:7.5px;background:repeating-linear-gradient(90deg,rgba(120,120,120,.16) 0 1px,rgba(120,120,120,0) 1px 2.5px);-webkit-mask-image:linear-gradient(90deg,rgba(0,0,0,.25),#000)"></div>
<div class="c" style="left:112px;width:204px;top:724.20px;font-size:12px;letter-spacing:-0.5px">521746633480</div>
<div class="c" style="left:317px;width:204px;top:724.20px;font-size:12px;letter-spacing:-0.5px">546476297</div>
<div class="c" style="left:522px;width:102px;top:724.20px;font-size:12px;letter-spacing:-0.1px">9-29</div>
<div class="c" style="left:625px;width:204px;top:724.20px;font-size:11.4px;letter-spacing:0px">百家乐</div>
<div class="c" style="left:830px;width:101px;top:724.20px;font-size:12px;letter-spacing:-0.3px">37</div>
<div class="c" style="left:932px;width:102px;top:724.20px;font-size:12px;letter-spacing:-0.45px">500.00</div>
<div class="c" style="left:1035px;width:102px;top:724.20px;font-size:12px;letter-spacing:-0.45px">500.00</div>
<div class="c" style="left:1138px;width:101px;top:724.20px;font-size:12px;letter-spacing:-0.45px">475.00</div>
<div class="c" style="left:1240px;width:204px;top:724.20px;font-size:12px;letter-spacing:-0.3px">2024-07-21 04:13:22</div>
<svg class="a" style="left:1483px;top:718.00px" width="27" height="24" viewBox="0 0 27 24"><rect width="27" height="24" rx="4" fill="#5eb95e"/><g fill="none" stroke="#fff" stroke-width="1"><path d="M13.5 5.2V6.8" stroke-width="1.3"/><path d="M7.3 7.6H18.9"/><path d="M9.6 9.5H17.1V12.5H9.6Z"/><path d="M7.6 16.6H19"/><path d="M8.3 14V16.6M11.2 14V16.6M13.5 14.5V16.6M16 14V16.6M18.4 14.6V16.6" stroke-width="0.9"/><path d="M8.3 14H12M14.8 14H17.8" stroke-width="0.8"/></g></svg>
<div class="a" style="left:41px;top:752.10px;font-size:12px;line-height:1;color:#d0d0d0">h</div>
<div class="a" style="left:46px;top:753.60px;width:39px;height:7.5px;background:repeating-linear-gradient(90deg,rgba(120,120,120,.16) 0 1px,rgba(120,120,120,0) 1px 2.5px);-webkit-mask-image:linear-gradient(90deg,rgba(0,0,0,.25),#000)"></div>
<div class="c" style="left:112px;width:204px;top:752.10px;font-size:12px;letter-spacing:-0.5px">521746632448</div>
<div class="c" style="left:317px;width:204px;top:752.10px;font-size:12px;letter-spacing:-0.5px">546476182</div>
<div class="c" style="left:522px;width:102px;top:752.10px;font-size:12px;letter-spacing:-0.1px">9-28</div>
<div class="c" style="left:625px;width:204px;top:752.10px;font-size:11.4px;letter-spacing:0px">百家乐</div>
<div class="c" style="left:830px;width:101px;top:752.10px;font-size:12px;letter-spacing:-0.3px">37</div>
<div class="c" style="left:932px;width:102px;top:752.10px;font-size:12px;letter-spacing:-0.45px">500.00</div>
<div class="c" style="left:1035px;width:102px;top:752.10px;font-size:12px;letter-spacing:-0.45px">0.00</div>
<div class="c" style="left:1138px;width:101px;top:752.10px;font-size:12px;letter-spacing:-0.45px">0.00</div>
<div class="c" style="left:1240px;width:204px;top:752.10px;font-size:12px;letter-spacing:-0.3px">2024-07-21 04:12:55</div>
<div class="bd t" style="left:1483px;top:745.90px"><span style="position:relative;top:0.5px">和</span></div>
<div class="a" style="left:41px;top:780.00px;font-size:12px;line-height:1;color:#d0d0d0">h</div>
<div class="a" style="left:46px;top:781.50px;width:30px;height:7.5px;background:repeating-linear-gradient(90deg,rgba(120,120,120,.16) 0 1px,rgba(120,120,120,0) 1px 2.5px);-webkit-mask-image:linear-gradient(90deg,rgba(0,0,0,.25),#000)"></div>
<div class="a" style="left:74px;top:780.00px;font-size:12px;line-height:1;color:#9a9a9a">7</div>
<div class="c" style="left:112px;width:204px;top:780.00px;font-size:12px;letter-spacing:-0.5px">521746631131</div>
<div class="c" style="left:317px;width:204px;top:780.00px;font-size:12px;letter-spacing:-0.5px">546476090</div>
<div class="c" style="left:522px;width:102px;top:780.00px;font-size:12px;letter-spacing:-0.1px">9-27</div>
<div class="c" style="left:625px;width:204px;top:780.00px;font-size:11.4px;letter-spacing:0px">百家乐</div>
<div class="c" style="left:830px;width:101px;top:780.00px;font-size:12px;letter-spacing:-0.3px">37</div>
<div class="c" style="left:932px;width:102px;top:780.00px;font-size:12px;letter-spacing:-0.45px">300.00</div>
<div class="c" style="left:1035px;width:102px;top:780.00px;font-size:12px;letter-spacing:-0.45px">300.00</div>
<div class="c" style="left:1138px;width:101px;top:780.00px;font-size:12px;letter-spacing:-0.45px">285.00</div>
<div class="c" style="left:1240px;width:204px;top:780.00px;font-size:12px;letter-spacing:-0.3px">2024-07-21 04:12:22</div>
<svg class="a" style="left:1483px;top:773.80px" width="27" height="24" viewBox="0 0 27 24"><rect width="27" height="24" rx="4" fill="#5eb95e"/><g fill="none" stroke="#fff" stroke-width="1"><path d="M13.5 5.2V6.8" stroke-width="1.3"/><path d="M7.3 7.6H18.9"/><path d="M9.6 9.5H17.1V12.5H9.6Z"/><path d="M7.6 16.6H19"/><path d="M8.3 14V16.6M11.2 14V16.6M13.5 14.5V16.6M16 14V16.6M18.4 14.6V16.6" stroke-width="0.9"/><path d="M8.3 14H12M14.8 14H17.8" stroke-width="0.8"/></g></svg>
<div class="sb"></div>
<div class="thumb"></div>
<svg class="a" style="left:1561px;top:39px" width="9" height="6" viewBox="0 0 9 6"><path d="M0.5 5.5 L4.5 0.8 L8.5 5.5Z" fill="#a3a3a3"/></svg>
<svg class="a" style="left:1561px;top:786px" width="9" height="6" viewBox="0 0 9 6"><path d="M0.5 0.5 L4.5 5.2 L8.5 0.5Z" fill="#505050"/></svg>
<div class="hbar"></div>
</body></html>
